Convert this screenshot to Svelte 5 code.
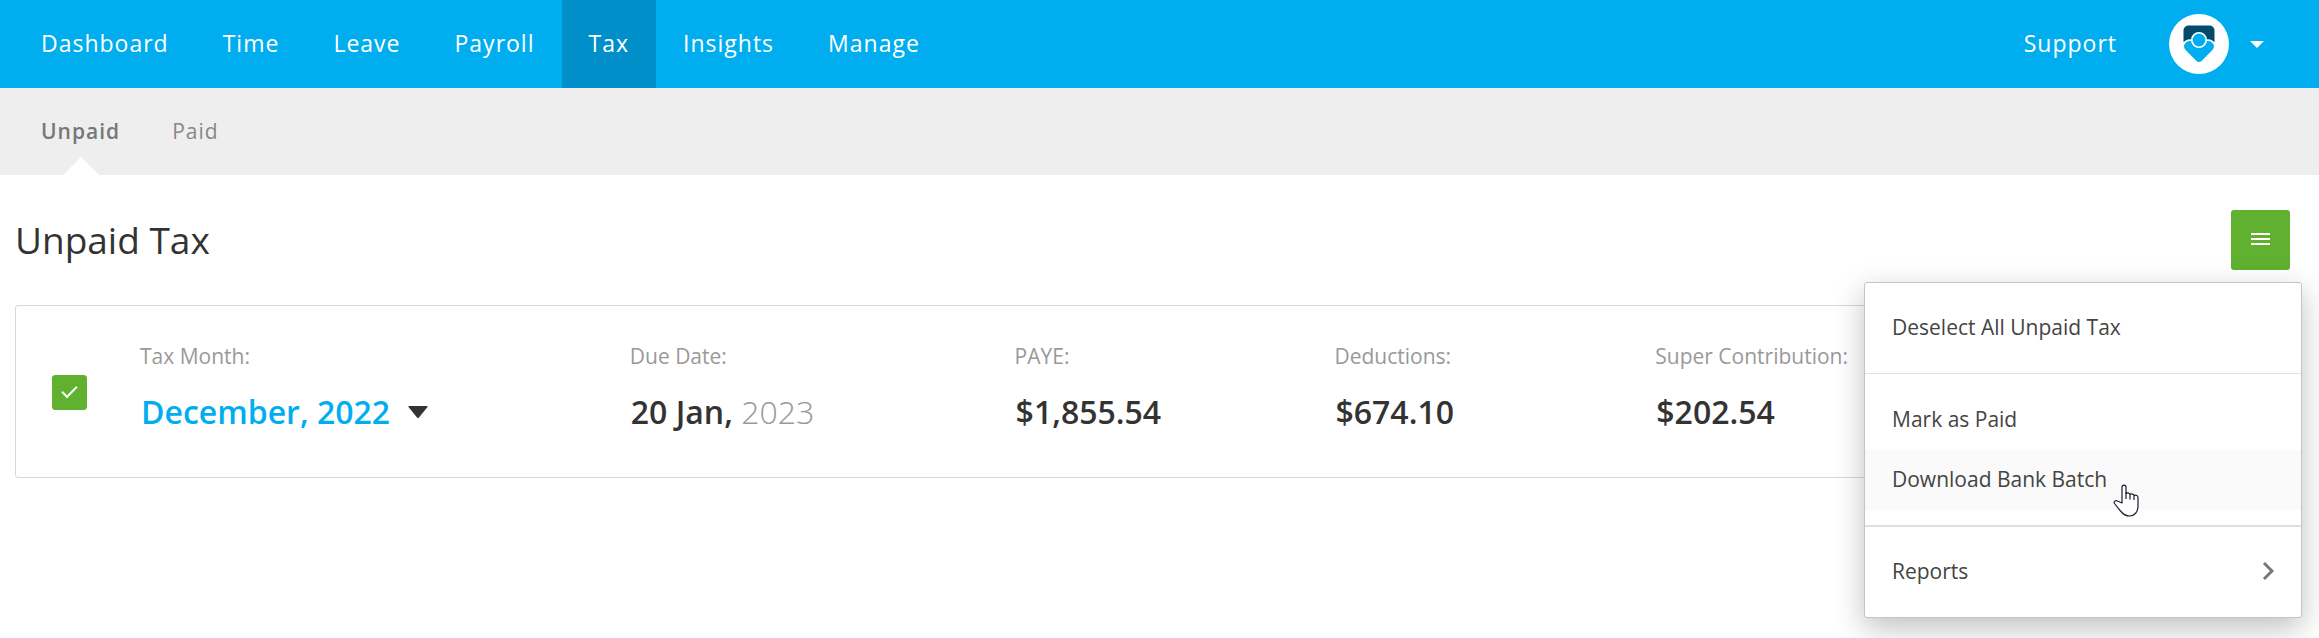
<script>
	const navItems = ['Dashboard', 'Time', 'Leave', 'Payroll', 'Tax', 'Insights', 'Manage'];
	const tabs = ['Unpaid', 'Paid'];

	const amounts = [
		{ label: 'PAYE:', value: '$1,855.54' },
		{ label: 'Deductions:', value: '$674.10' },
		{ label: 'Super Contribution:', value: '$202.54' }
	];

	let activeNav = $state('Tax');
	let activeTab = $state('Unpaid');
	let selected = $state(true);
	let menuOpen = $state(true);
</script>

<div class="page">
	<header class="top-bar">
		<nav class="main-nav" aria-label="Main">
			{#each navItems as item}
				<a href="#{item.toLowerCase()}" class:active={item === activeNav} onclick={() => (activeNav = item)}>{item}</a>
			{/each}
		</nav>
		<div class="account">
			<a href="#support" class="support">Support</a>
			<button class="profile" aria-label="Account menu">
				<svg class="avatar" viewBox="0 0 60 60">
					<circle cx="30" cy="30" r="30" fill="#fff" />
					<path d="M14.500 28V16.500a5 5 0 0 1 5-5h21a5 5 0 0 1 5 5V28z" fill="#034a68" />
					<path
						d="M30 31.500C26 25 18 24.500 15 29.500C13.500 32.500 14.500 35 16.500 37L27 47.500Q30 50 33 47.500L43.500 37C45.500 35 46.500 32.500 45 29.500C42 24.500 34 25 30 31.500z"
						fill="#00aeef"
						stroke="#fff"
						stroke-width="1.500"
					/>
					<circle cx="30" cy="26" r="7.200" fill="#00aeef" stroke="#fff" stroke-width="1.600" />
				</svg>
				<svg class="caret" viewBox="0 0 14 7"><path d="M0 0h14L7 7z" fill="#fff" /></svg>
			</button>
		</div>
	</header>

	<nav class="sub-nav" aria-label="Tax">
		{#each tabs as tab}
			<a href="#{tab.toLowerCase()}" class:active={tab === activeTab} onclick={() => (activeTab = tab)}>{tab}</a>
		{/each}
	</nav>

	<main>
		<div class="title-row">
			<h1>Unpaid Tax</h1>
			<div class="actions">
				<button class="menu-button" aria-label="Actions" aria-expanded={menuOpen} onclick={() => (menuOpen = !menuOpen)}>
					<svg viewBox="0 0 19 12"><path d="M0 1h19M0 6h19M0 11h19" stroke="#fff" stroke-width="2" /></svg>
				</button>
				{#if menuOpen}
					<div class="menu">
						<div class="menu-group">
							<button>Deselect All Unpaid Tax</button>
						</div>
						<div class="menu-group">
							<button>Mark as Paid</button>
							<button class="hovered">Download Bank Batch</button>
							<svg class="pointer" viewBox="0 0 26 33">
								<path
									d="M9 19V3.200C9 .3 13 .3 13 3.200V9.500C14.500 8.500 17 9 17 10.500C18.500 9.500 21 10 21 11.500C23 10.800 25 11.500 25 13.500V22C25 28 21.500 32 16.500 32C12.500 32 10 30 7.500 27L1.500 19.500C.5 17.500 2.500 16 4.500 17z"
									fill="#fff"
									stroke="#1b1b2f"
									stroke-width="1.200"
									stroke-linejoin="round"
								/>
								<path d="M13 9v6M17 10.500v5M21 11.500v4.500" stroke="#1b1b2f" stroke-width="1.200" />
							</svg>
						</div>
						<div class="menu-group">
							<button>
								Reports
								<svg class="chevron" viewBox="0 0 12 20"><path d="M2 2l8 8-8 8" fill="none" stroke="#777" stroke-width="3" /></svg>
							</button>
						</div>
					</div>
				{/if}
			</div>
		</div>

		<section class="tax-card">
			<input type="checkbox" aria-label="Select December, 2022" bind:checked={selected} />
			<div class="fields">
				<div class="field">
					<span class="label">Tax Month:</span>
					<button class="value month">
						December, 2022
						<svg viewBox="0 0 20 12"><path d="M1 0h18q1 0 .5 1L11 11.500q-1 1-2 0L.5 1Q0 0 1 0z" fill="#333" /></svg>
					</button>
				</div>
				<div class="field">
					<span class="label">Due Date:</span>
					<span class="value">20 Jan, <span class="year">2023</span></span>
				</div>
				{#each amounts as amount}
					<div class="field">
						<span class="label">{amount.label}</span>
						<span class="value">{amount.value}</span>
					</div>
				{/each}
			</div>
		</section>
	</main>
</div>

<style>
	:global(body) {
		background: #fff;
	}

	.page {
		min-height: 100vh;
		font-family: "Open Sans", sans-serif;
		color: #333;
	}

	a {
		color: inherit;
		text-decoration: none;
	}

	button {
		border: none;
		background: none;
		padding: 0;
		font: inherit;
		color: inherit;
		cursor: pointer;
	}

	svg {
		display: block;
		flex-shrink: 0;
	}

	.top-bar {
		display: flex;
		justify-content: space-between;
		height: 88px;
		padding: 0 55px 0 14px;
		background: #00aeef;
		color: #fff;
		font-size: 23px;
		line-height: 87px;
		letter-spacing: 1px;
	}

	.main-nav {
		display: flex;
	}

	.main-nav a {
		padding: 0 27px;
	}

	.main-nav a.active {
		background: #008fc9;
	}

	.account {
		display: flex;
		align-items: center;
		gap: 52px;
	}

	.support {
		align-self: flex-start;
	}

	.profile {
		display: flex;
		align-items: center;
		gap: 21px;
	}

	.avatar {
		width: 60px;
		height: 60px;
	}

	.caret {
		width: 14px;
		height: 7px;
	}

	.sub-nav {
		display: flex;
		gap: 52px;
		height: 87px;
		padding: 0 41px;
		background: #eee;
		color: #888;
		font-size: 21px;
		line-height: 87px;
		letter-spacing: 1px;
	}

	.sub-nav a {
		position: relative;
	}

	.sub-nav a.active {
		color: #777;
		font-weight: 600;
	}

	.sub-nav a.active::after {
		content: "";
		position: absolute;
		bottom: 0;
		left: 50%;
		margin-left: -18px;
		border: 18px solid transparent;
		border-top: none;
		border-bottom-color: #fff;
	}

	main {
		padding: 35px 17px 0 15px;
	}

	.title-row {
		display: flex;
		align-items: center;
		justify-content: space-between;
		padding-right: 12px;
	}

	h1 {
		margin: 0;
		font-size: 37px;
		font-weight: 400;
		line-height: 60px;
	}

	.actions {
		position: relative;
	}

	.menu-button {
		display: flex;
		align-items: center;
		justify-content: center;
		width: 59px;
		height: 60px;
		padding-bottom: 2px;
		border-radius: 3px;
		background: #5fb12f;
	}

	.menu-button svg {
		width: 19px;
		height: 12px;
	}

	.menu {
		position: absolute;
		top: 72px;
		right: -12px;
		z-index: 1;
		width: 436px;
		border: 1px solid #c4c4c4;
		border-radius: 3px;
		background: #fff;
		box-shadow: 0 10px 30px rgba(0, 0, 0, 0.25);
	}

	.menu-group {
		position: relative;
		padding: 15px 0;
		border-bottom: 1px solid #e0e0e0;
	}

	.menu-group:nth-child(2) {
		padding-top: 16px;
		border-bottom-width: 2px;
	}

	.menu-group:last-child {
		border-bottom: none;
	}

	.menu button {
		display: flex;
		align-items: center;
		justify-content: space-between;
		width: 100%;
		padding: 0 27px 2px;
		color: #444;
		font-size: 21px;
		line-height: 58px;
		text-align: left;
	}

	.menu button.hovered {
		background: #fafafa;
	}

	.chevron {
		width: 12px;
		height: 20px;
	}

	.pointer {
		position: absolute;
		top: 110px;
		left: 248px;
		width: 26px;
		height: 33px;
	}

	.tax-card {
		display: flex;
		align-items: center;
		margin-top: 35px;
		padding: 30px 0 42px 36px;
		border: 1px solid #d8d8d8;
		border-radius: 3px;
	}

	input {
		display: flex;
		align-items: center;
		justify-content: center;
		width: 35px;
		height: 35px;
		margin: 14px 53px 0 0;
		appearance: none;
		border: 1px solid #5fb12f;
		border-radius: 3px;
	}

	input:checked {
		background: #5fb12f;
	}

	input:checked::after {
		content: "";
		width: 13px;
		height: 6px;
		margin-bottom: 5px;
		border: solid #fff;
		border-width: 0 0 2px 2px;
		transform: rotate(-45deg);
	}

	.fields {
		display: grid;
		flex: 1;
		grid-template-columns: 490fr 385fr 320fr 321fr 646fr;
	}

	.field {
		display: flex;
		flex-direction: column;
		align-items: flex-start;
		gap: 12px;
	}

	.label {
		color: #999;
		font-size: 21px;
		line-height: 40px;
	}

	.value {
		padding-left: 1px;
		font-size: 32px;
		font-weight: 600;
		line-height: 47px;
	}

	.month {
		display: flex;
		align-items: center;
		gap: 18px;
		color: #00aeef;
	}

	.month svg {
		width: 20px;
		height: 12px;
	}

	.year {
		color: #999;
		font-weight: 300;
	}
</style>
